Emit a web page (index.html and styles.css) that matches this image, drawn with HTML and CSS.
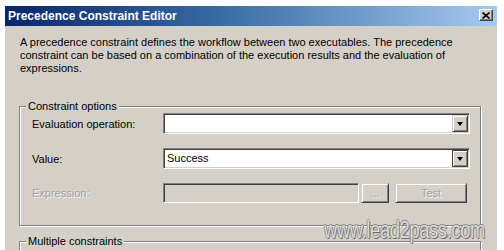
FILE: index.html
```html
<!DOCTYPE html>
<html>
<head>
<meta charset="utf-8">
<link rel="stylesheet" href="styles.css">
</head>
<body>
<div class="dialog">
  <div class="titlebar">
    <span class="title">Precedence Constraint Editor</span>
    <span class="close"><svg width="8" height="7" viewBox="0 0 8 7"><path d="M0.5 0.5 L7.5 6.5 M7.5 0.5 L0.5 6.5" stroke="#000" stroke-width="1.6"/></svg></span>
  </div>
  <div class="content">
    <p class="desc">A precedence constraint defines the workflow between two executables. The precedence constraint can be based on a combination of the execution results and the evaluation of expressions.</p>
    <fieldset class="group">
      <legend>Constraint options</legend>
      <div class="grid">
        <span class="lbl">Evaluation operation:</span>
        <div class="combo"><span class="val"></span><span class="dd"><i class="arrow"></i></span></div>
        <span class="lbl">Value:</span>
        <div class="combo"><span class="val">Success</span><span class="dd focus"><i class="arrow"></i></span></div>
        <span class="lbl disabled">Expression:</span>
        <div class="exprrow">
          <div class="textbox"></div>
          <span class="btn small disabled">...</span>
          <span class="btn test disabled">Test</span>
        </div>
      </div>
    </fieldset>
    <fieldset class="group second">
      <legend>Multiple constraints</legend>
    </fieldset>
  </div>
  <div class="watermark">www.lead2pass.com</div>
</div>
</body>
</html>
```
FILE: styles.css
```css
html, body {
  margin: 0;
  padding: 0;
  background: #ffffff;
}
body {
  font-family: "Liberation Sans", Arial, sans-serif;
  font-size: 11px;
  color: #000;
  overflow: hidden;
  height: 250px;
}
.dialog {
  position: relative;
  margin: 6px 0 0 5px;
  width: 492px;
  height: 260px;
  background: #d4d0c8;
}
.titlebar {
  height: 20px;
  display: flex;
  align-items: center;
  justify-content: space-between;
  padding: 0 4px 0 3px;
  background: linear-gradient(to right, #0a246a 0%, #3a6ea5 45%, #a6caf0 100%);
}
.title {
  color: #fff;
  font-weight: bold;
  font-size: 12px;
  letter-spacing: 0;
}
.close {
  width: 12px;
  height: 10px;
  display: flex;
  align-items: center;
  justify-content: center;
  background: #d4d0c8;
  border: 1px solid;
  border-color: #fff #404040 #404040 #fff;
  box-shadow: inset -1px -1px 0 #808080;
  margin-top: -2px;
}
.content {
  padding: 0 0 0 14px;
}
.desc {
  margin: 10px 0 0 1px;
  width: 465px;
  line-height: 13px;
}
.group {
  margin: 25px 0 0 0;
  box-sizing: content-box;
  padding: 0 10px 22px 12px;
  width: 438px;
  border: 1px solid #808080;
  box-shadow: inset 1px 1px 0 #fff, 1px 1px 0 #fff;
}
.group legend {
  padding: 0 2px;
  margin-left: -6px;
  line-height: 13px;
  background: #d4d0c8;
}
.group.second {
  margin-top: 9px;
  height: 40px;
}
.grid {
  display: grid;
  grid-template-columns: 131px 307px;
  row-gap: 14px;
  align-items: center;
}
.lbl.disabled, .btn.disabled {
  color: #a0a0a0;
  text-shadow: 1px 1px 0 #f4f4f4;
}
.combo {
  height: 21px;
  box-sizing: border-box;
  display: flex;
  align-items: stretch;
  background: #fff;
  border: 1px solid;
  border-color: #808080 #fff #fff #808080;
  box-shadow: inset 1px 1px 0 #404040, inset -1px -1px 0 #d4d0c8;
  padding: 1px;
}
.val {
  flex: 1;
  padding-left: 2px;
  line-height: 17px;
}
.dd {
  width: 16px;
  box-sizing: border-box;
  display: flex;
  align-items: center;
  justify-content: center;
  background: #d4d0c8;
  border: 1px solid;
  border-color: #d4d0c8 #404040 #404040 #d4d0c8;
  box-shadow: inset 1px 1px 0 #fff, inset -1px -1px 0 #808080;
}
.dd.focus {
  border-color: #404040;
}
.arrow {
  display: block;
  width: 0;
  height: 0;
  border-left: 3.5px solid transparent;
  border-right: 3.5px solid transparent;
  border-top: 4px solid #000;
  margin-top: 1px;
}
.exprrow {
  display: flex;
  align-items: stretch;
  height: 20px;
}
.textbox {
  width: 196px;
  box-sizing: border-box;
  background: #d4d0c8;
  border: 1px solid;
  border-color: #808080 #fff #fff #808080;
  box-shadow: inset 1px 1px 0 #404040, inset -1px -1px 0 #d4d0c8;
}
.btn {
  box-sizing: border-box;
  display: flex;
  align-items: center;
  justify-content: center;
  background: #d4d0c8;
  border: 1px solid;
  border-color: #d4d0c8 #404040 #404040 #d4d0c8;
  box-shadow: inset 1px 1px 0 #fff, inset -1px -1px 0 #808080;
}
.btn.small {
  width: 28px;
  margin-left: 2px;
}
.btn.test {
  width: 72px;
  margin-left: 6px;
}
.watermark {
  position: absolute;
  left: 319px;
  top: 211px;
  font-size: 23px;
  line-height: 26px;
  letter-spacing: -0.5px;
  transform: scaleX(0.8);
  transform-origin: left top;
  color: #dcdad6;
  text-shadow: 1px 1px 0 #6c6c6c, -1px 0 0 #8a8a8a, 0 -1px 0 #8a8a8a;
}
```
